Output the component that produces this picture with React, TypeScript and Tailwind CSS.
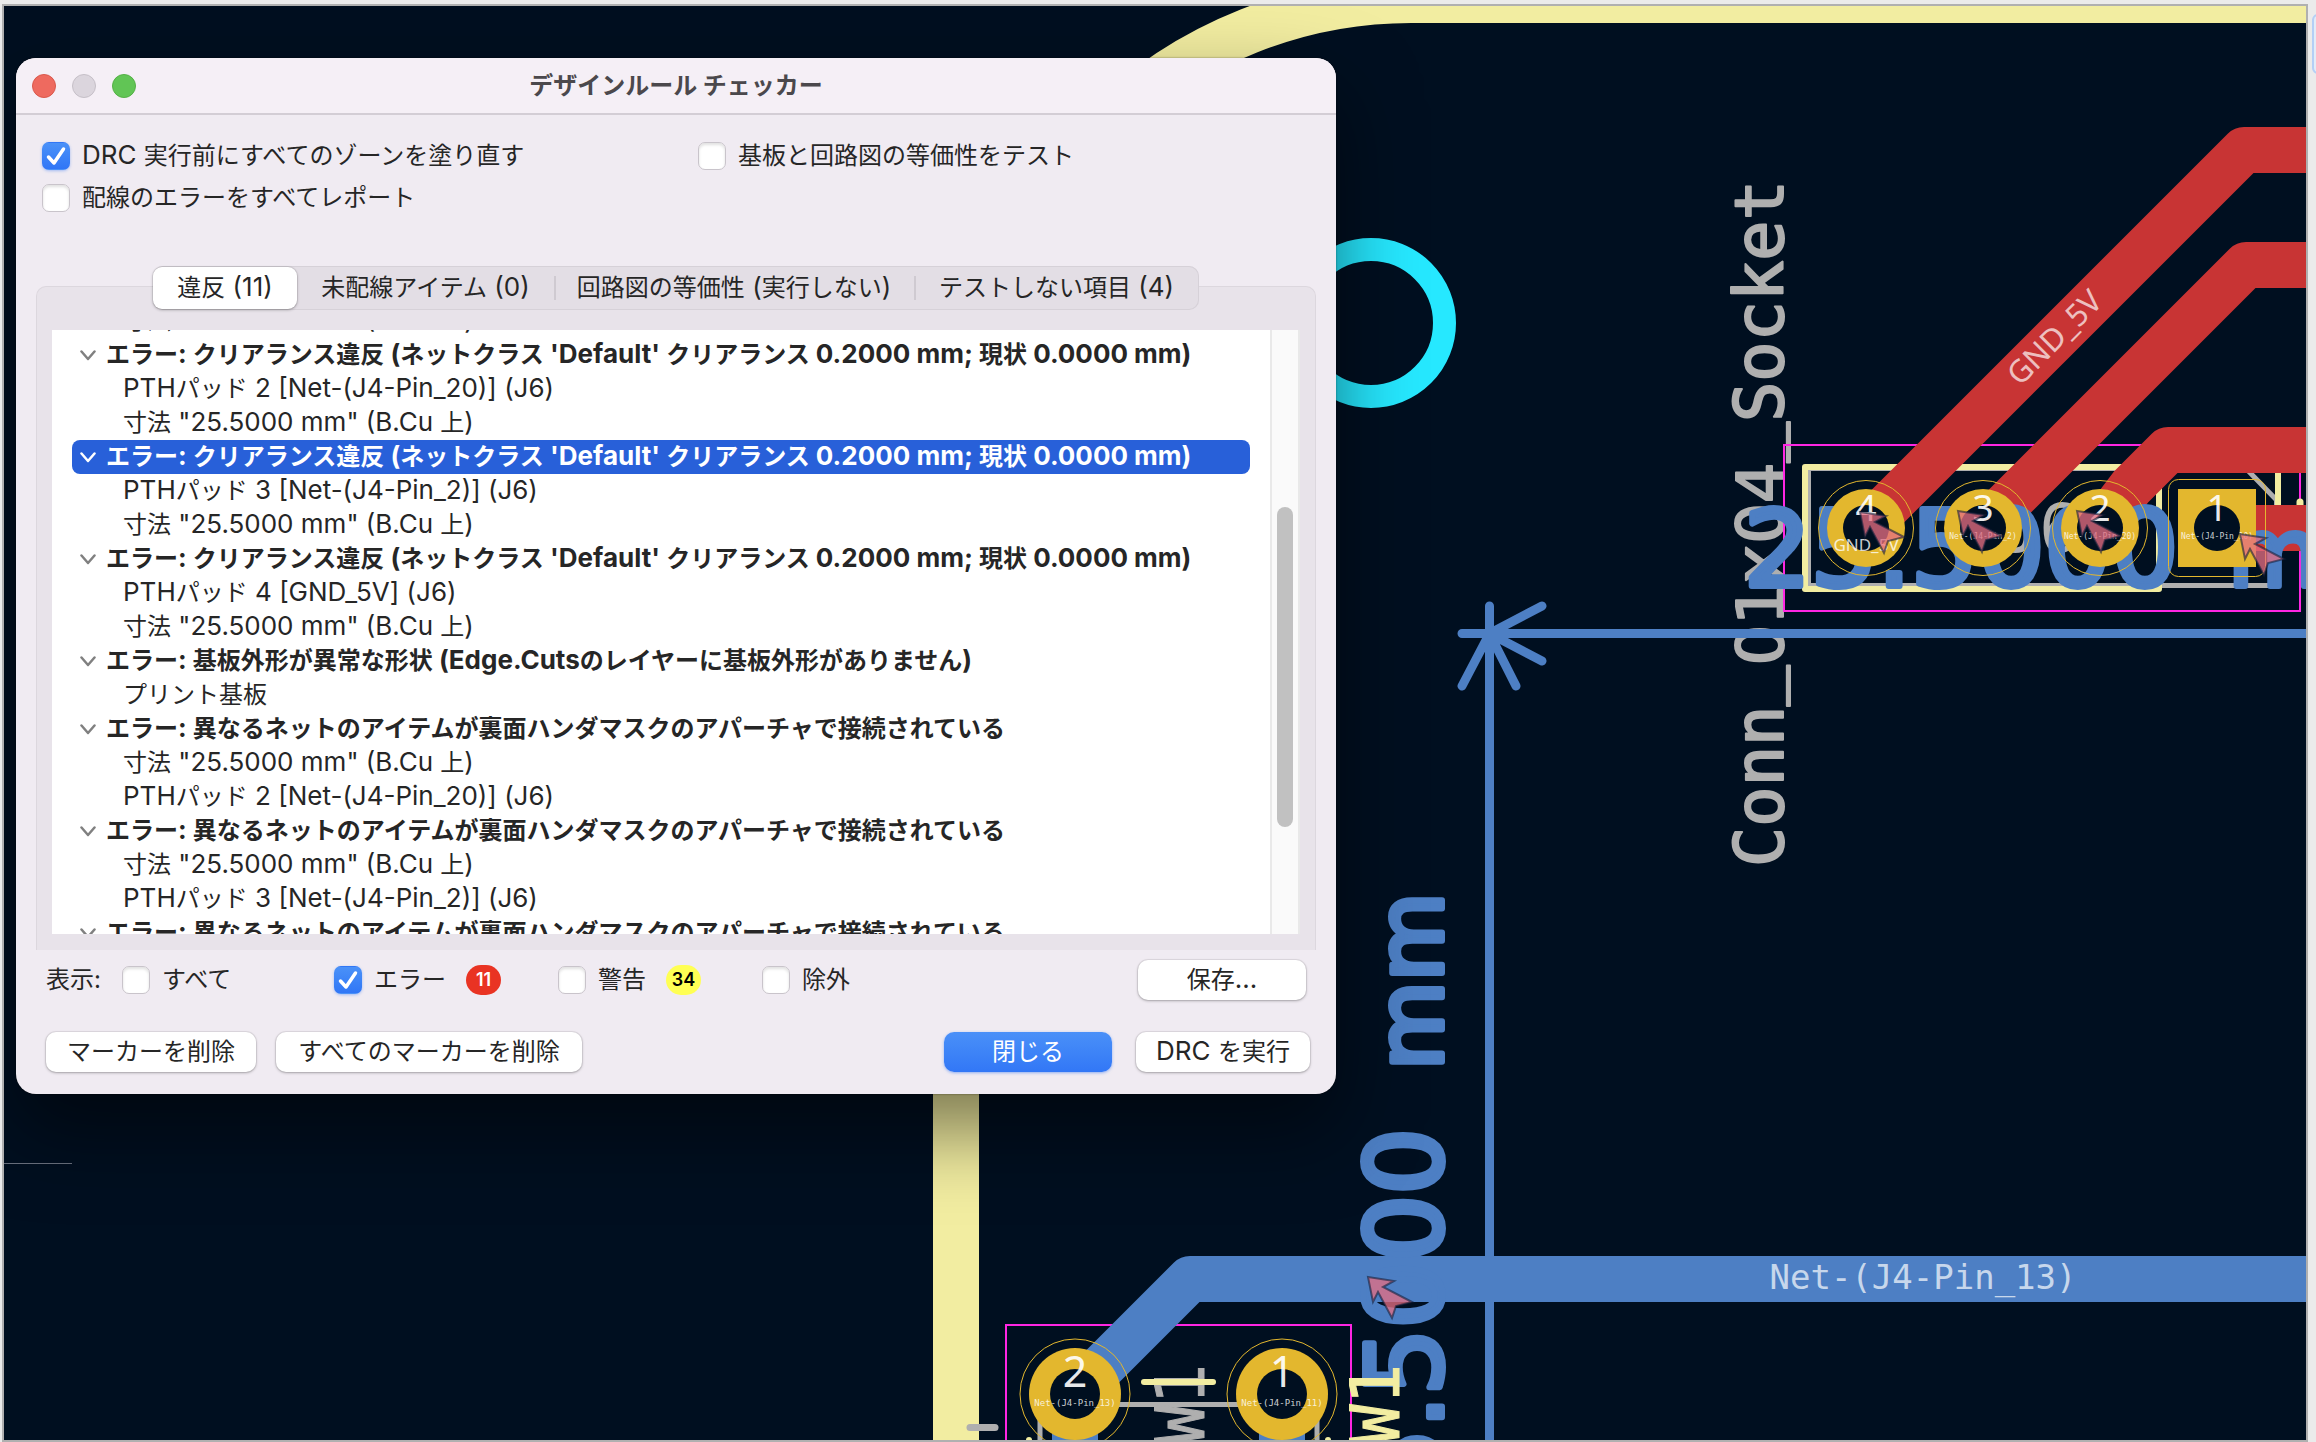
import React, { useId, useState } from "react";

const ui = "font-['Inter','Noto_Sans_CJK_JP',sans-serif]";

/* Latin runs are set slightly larger than the kana and kanji around them. */
function Mixed({ text }: { text: string }) {
  return (
    <>
      {text.split(/([\x20-\x7e]+)/).map((run, i) =>
        i % 2 === 1 ? <span key={i} className="text-[26px] leading-none">{run}</span> : run
      )}
    </>
  );
}

function Check({ label, initial = false }: { label: string; initial?: boolean }) {
  const id = useId();
  const [on, setOn] = useState(initial);
  return (
    <span className="flex h-7 items-center gap-3 leading-7">
      <span className="relative flex size-7 shrink-0">
        <input
          id={id}
          type="checkbox"
          checked={on}
          onChange={() => setOn(!on)}
          className="size-7 appearance-none rounded-[7px] border border-[#c9c4cb] bg-white shadow-[inset_0_2px_3px_rgba(0,0,0,0.12)] checked:border-transparent checked:bg-linear-to-b checked:from-[#4a91f8] checked:to-[#3076f6] checked:shadow-[0_1px_3px_rgba(48,118,246,0.4)]"
        />
        {on && (
          <svg viewBox="0 0 28 28" className="pointer-events-none absolute inset-0 size-7" fill="none">
            <path d="M6.500 15 L12 21 L21.500 7" stroke="#fff" strokeWidth="3.500" strokeLinecap="round" strokeLinejoin="round" />
          </svg>
        )}
      </span>
      <label htmlFor={id} className="whitespace-nowrap"><Mixed text={label} /></label>
    </span>
  );
}

function PushButton({ label, className, primary }: { label: string; className: string; primary?: boolean }) {
  return (
    <button
      type="button"
      className={
        "h-10 shrink-0 rounded-[10px] text-center leading-10 " +
        (primary
          ? "bg-linear-to-b from-[#4a90f8] to-[#3277f6] text-white shadow-[0_1px_3px_rgba(48,118,246,0.5)] "
          : "bg-white shadow-[0_0_0_1px_rgba(0,0,0,0.06),0_1px_3px_rgba(0,0,0,0.28)] ") +
        className
      }
    >
      <Mixed text={label} />
    </button>
  );
}

type Row = { text: string; head?: boolean; selected?: boolean };

const clearance = "エラー: クリアランス違反 (ネットクラス 'Default' クリアランス 0.2000 mm; 現状 0.0000 mm)";
const mask = "エラー: 異なるネットのアイテムが裏面ハンダマスクのアパーチャで接続されている";
const dim = '寸法 "25.5000 mm" (B.Cu 上)';

const rows: Row[] = [
  { text: dim },
  { text: clearance, head: true },
  { text: "PTHパッド 2 [Net-(J4-Pin_20)] (J6)" },
  { text: dim },
  { text: clearance, head: true, selected: true },
  { text: "PTHパッド 3 [Net-(J4-Pin_2)] (J6)" },
  { text: dim },
  { text: clearance, head: true },
  { text: "PTHパッド 4 [GND_5V] (J6)" },
  { text: dim },
  { text: "エラー: 基板外形が異常な形状 (Edge.Cutsのレイヤーに基板外形がありません)", head: true },
  { text: "プリント基板" },
  { text: mask, head: true },
  { text: dim },
  { text: "PTHパッド 2 [Net-(J4-Pin_20)] (J6)" },
  { text: mask, head: true },
  { text: dim },
  { text: "PTHパッド 3 [Net-(J4-Pin_2)] (J6)" },
  { text: mask, head: true },
];

function TreeRow({ row }: { row: Row }) {
  if (!row.head) {
    return <li className="h-[34px] pl-[51px] leading-[34px] whitespace-nowrap"><Mixed text={row.text} /></li>;
  }
  return (
    <li
      className={
        "flex h-[34px] items-center gap-[10px] rounded-lg pl-2 leading-[34px] font-bold whitespace-nowrap " +
        (row.selected ? "bg-[#2860d9] text-white" : "")
      }
    >
      <svg viewBox="0 0 16 16" className={"size-4 shrink-0 " + (row.selected ? "text-white" : "text-[#808080]")} fill="none">
        <path d="M1.500 4.500 L8 12 L14.500 4.500" stroke="currentColor" strokeWidth="2.500" strokeLinecap="round" strokeLinejoin="round" />
      </svg>
      <span><Mixed text={row.text} /></span>
    </li>
  );
}

const tabs = [
  { label: "違反 (11)", width: "w-[144px]" },
  { label: "未配線アイテム (0)", width: "w-[257px]" },
  { label: "回路図の等価性 (実行しない)", width: "w-[360px]" },
  { label: "テストしない項目 (4)", width: "w-[285px]" },
];

function Dialog() {
  return (
    <section
      role="dialog"
      aria-labelledby="drc-title"
      className={
        "absolute top-[52px] left-3 w-[1320px] overflow-hidden rounded-[20px] bg-[#f0ebf2] text-2xl text-[#262626] shadow-[0_36px_80px_rgba(0,0,0,0.5),0_0_2px_rgba(0,0,0,0.5)] " +
        ui
      }
    >
      <header className="grid h-[57px] grid-cols-[1fr_auto_1fr] items-center border-b-2 border-[#d3cdd5] bg-[#f5eff6] px-4">
        <span className="flex gap-4">
          <button type="button" aria-label="閉じる" className="size-6 rounded-full border border-[#d9584c] bg-[#ee6a5f]" />
          <button type="button" aria-label="しまう" className="size-6 rounded-full border border-[#c5bfc7] bg-[#dbd5dd]" />
          <button type="button" aria-label="拡大" className="size-6 rounded-full border border-[#54b046] bg-[#61c555]" />
        </span>
        <h1 id="drc-title" className="leading-8 font-bold text-[#4b484c]">デザインルール チェッカー</h1>
      </header>

      <div className="grid grid-cols-[656px_1fr] gap-y-[14px] px-[26px] pt-[27px]">
        <Check label="DRC 実行前にすべてのゾーンを塗り直す" initial />
        <Check label="基板と回路図の等価性をテスト" />
        <Check label="配線のエラーをすべてレポート" />
      </div>

      <div className="mt-[54px] flex flex-col px-5">
        <div role="tablist" className="relative z-10 flex h-11 self-center rounded-[10px] bg-[#e3dee5] shadow-[inset_0_0_0_1px_#d6d1d8]">
          {tabs.map((t, i) => (
            <button
              key={t.label}
              type="button"
              role="tab"
              aria-selected={i === 0}
              className={
                "relative my-px h-[42px] text-center leading-[42px] whitespace-nowrap " +
                t.width +
                (i === 0 ? " rounded-[9px] bg-white shadow-[0_0_0_1px_rgba(0,0,0,0.06),0_1px_3px_rgba(0,0,0,0.3)]" : "") +
                (i > 1 ? " before:absolute before:top-[9px] before:left-0 before:h-6 before:w-0.5 before:bg-[#cfcad1]" : "")
              }
            >
              <Mixed text={t.label} />
            </button>
          ))}
        </div>
        <div className="-mt-6 rounded-t-[10px] border border-b-0 border-[#dcd7de] bg-[#e8e3ea] px-[15px] pt-[43px] pb-4">
          <div className="flex h-[604px] overflow-hidden bg-white">
            <ul className="-mt-[26px] flex-1 pr-5 pl-5">
              {rows.map((r, i) => (
                <TreeRow key={i} row={r} />
              ))}
            </ul>
            <div className="w-[30px] border-x-2 border-[#e9e9e9] bg-[#fafafa] pt-[177px] pl-[5px]">
              <div className="h-80 w-4 rounded-full bg-[#c1c1c1]" />
            </div>
          </div>
        </div>
      </div>

      <div className="mt-[10px] flex h-10 items-center pr-[30px] pl-[30px]">
        <span className="w-[76px]">表示:</span>
        <span className="w-[212px]"><Check label="すべて" /></span>
        <span className="flex w-[224px] items-center gap-5">
          <Check label="エラー" initial />
          <span className="h-[30px] w-[35px] rounded-full bg-[#e93323] text-center text-lg leading-[30px] font-semibold text-white">11</span>
        </span>
        <span className="flex w-[204px] items-center gap-5">
          <Check label="警告" />
          <span className="h-[30px] w-[35px] rounded-full bg-[#ffff54] text-center text-lg leading-[30px] font-semibold text-black">34</span>
        </span>
        <Check label="除外" />
        <PushButton label="保存..." className="ml-auto w-[168px]" />
      </div>

      <footer className="mt-8 flex px-[30px] pb-[22px]">
        <PushButton label="マーカーを削除" className="w-[210px]" />
        <PushButton label="すべてのマーカーを削除" className="ml-5 w-[306px]" />
        <PushButton label="閉じる" primary className="mr-6 ml-auto w-[168px]" />
        <PushButton label="DRC を実行" className="-mr-1 w-[174px]" />
      </footer>
    </section>
  );
}

const COPPER_F = "#c83434";
const COPPER_B = "#4d7fc4";
const SILK = "#f2eda1";
const FAB = "#afafaf";
const COURT = "#ff26e2";
const GOLD = "#e3b72e";
const BG = "#000f20";
const MONO = "'DejaVu Sans Mono', monospace";
const THIN_MONO = "'Liberation Mono', monospace";
const SANS = "'DejaVu Sans', sans-serif";
const LABEL = "'Noto Sans', sans-serif";

function Marker({ x, y }: { x: number; y: number }) {
  return (
    <path
      d={`M${x} ${y} l26 4 l-11 6 l29 15 l-16 4 l-4 12 l-14 -26 l-5 10 z`}
      fill="#e66e82"
      fillOpacity="0.76"
      stroke="#14203a"
      strokeOpacity="0.6"
      strokeWidth="2"
    />
  );
}

function RoundPad({ x, y, r, hole, ring, num, numSize, net, netSize, netY }: {
  x: number; y: number; r: number; hole: number; ring: number; num: string; numSize: number; net: string; netSize: number; netY: number;
}) {
  return (
    <g>
      <circle cx={x} cy={y} r={r} fill={GOLD} />
      <circle cx={x} cy={y} r={hole} fill={BG} />
      <circle cx={x} cy={y} r={ring} fill="none" stroke={GOLD} strokeWidth="1" />
      <text x={x} y={y - 7} textAnchor="middle" fontFamily={LABEL} fontSize={numSize} fill="#fff" fillOpacity="0.92">{num}</text>
      <text x={x} y={netY} textAnchor="middle" fontFamily={netSize > 10 ? LABEL : MONO} fontSize={netSize} fill="#fff" fillOpacity="0.8">{net}</text>
    </g>
  );
}

function Board() {
  return (
    <svg viewBox="4 6 2302 1434" preserveAspectRatio="xMinYMin slice" className="absolute inset-0 size-full">
      <path d="M956 1460 V440 H971 A440 440 0 0 1 1411 0 H2320" fill="none" stroke={SILK} strokeWidth="46" />
      <path d="M4 1163.500 H72" stroke="#6b7280" />
      <circle cx="1371" cy="323" r="73.500" fill="none" stroke="#26e8ff" strokeWidth="23" />

      <text transform="translate(1783 867) rotate(-90)" fontFamily={MONO} fontSize="67" fill={FAB} stroke={FAB} strokeWidth="2" strokeLinejoin="round">
        Conn<tspan fontFamily={THIN_MONO}>_</tspan><tspan fontFamily={SANS} fontSize="64">01</tspan>x<tspan fontFamily={SANS} fontSize="64">04</tspan><tspan fontFamily={THIN_MONO}>_</tspan>Socket
      </text>
      <text x="1999" y="552" fontFamily={MONO} fontSize="67" fill={FAB}>J6</text>

      <rect x="1784" y="445" width="516" height="166" fill="none" stroke={COURT} strokeWidth="2" />
      <path d="M1808.500 468.500 H2246 L2276.500 500 V585.500 H1808.500 Z" fill="none" stroke={FAB} strokeWidth="5" />
      <rect x="1805" y="467" width="354" height="122" fill="none" stroke={SILK} strokeWidth="6" strokeLinejoin="round" />
      <path d="M2278 466 V520" stroke={SILK} strokeWidth="6" />
      <path d="M2300 502 V530" stroke={SILK} strokeWidth="7" strokeLinecap="round" />

      <g fill="none" stroke={COPPER_F} strokeWidth="46" strokeLinecap="round" strokeLinejoin="round">
        <path d="M2330 150 H2244 L1866 528" />
        <path d="M2330 265 H2246 L1983 528" />
        <path d="M2330 450 H2168 L2131 487 L2100 528" />
        <path d="M2330 528 H2217" />
      </g>
      <text transform="translate(2055 338) rotate(-45)" y="10" textAnchor="middle" fontFamily={LABEL} fontSize="31" fill="#fff" fillOpacity="0.7">GND_5V</text>

      <rect x="1006" y="1325" width="345" height="160" fill="none" stroke={COURT} strokeWidth="2" />
      <path d="M1075 1404.500 H1282 M1040 1404 V1450 M1317 1404 V1450" stroke={FAB} strokeWidth="5" />
      <path d="M970 1427.500 H995" stroke={FAB} strokeWidth="7" strokeLinecap="round" />
      <text transform="translate(1204 1364) rotate(-90)" textAnchor="end" fontFamily={MONO} fontSize="67" fill={FAB} stroke={FAB}>SW1</text>
      <path d="M1144 1382 H1213" stroke={SILK} strokeWidth="6" strokeLinecap="round" />
      <circle cx="1029" cy="1440" r="3" fill={SILK} />
      <circle cx="1328" cy="1440" r="3" fill={SILK} />

      <g fill="none" stroke={COPPER_B} strokeLinecap="round" strokeLinejoin="round">
        <path d="M2330 1279 H1190 L1075 1394 V1480 M1282 1394 V1480" strokeWidth="46" />
        <path d="M2330 633.500 H1462 M1489.500 606 V1460 M1542 606 L1489.500 633.500 L1542 661 M1462 686 L1489.500 633.500 L1516 686" strokeWidth="9" />
      </g>
      <g fill={COPPER_B} stroke={COPPER_B} strokeWidth="6" strokeLinejoin="round" fontFamily={SANS}>
        <text x="1744" y="586" fontSize="105">25.5000</text>
        <text x="2228" y="586" fontSize="95">mm</text>
        <text transform="translate(1442 1128) rotate(-90)" textAnchor="end" fontSize="105">25.5000</text>
        <text transform="translate(1442 1070) rotate(-90)" fontSize="91">mm</text>
      </g>
      <text transform="translate(1399 1364) rotate(-90)" textAnchor="end" fontFamily={MONO} fontSize="67" fill={SILK} stroke={SILK}>SW1</text>
      <text x="1923" y="1289" textAnchor="middle" fontFamily={MONO} fontSize="34" fill="#fff" fillOpacity="0.7">Net-(J4-Pin_13)</text>

      <RoundPad x={1866} y={528} r={39} hole={23} ring={47.5} num="4" numSize={37} net="GND_5V" netSize={17} netY={551} />
      <RoundPad x={1983} y={528} r={39} hole={23} ring={47.5} num="3" numSize={37} net="Net-(J4-Pin_2)" netSize={8} netY={539} />
      <RoundPad x={2100} y={528} r={39} hole={23} ring={47.5} num="2" numSize={37} net="Net-(J4-Pin_20)" netSize={8} netY={539} />
      <rect x="2178" y="489" width="78" height="78" fill={GOLD} />
      <circle cx="2217" cy="528" r="23" fill={BG} />
      <rect x="2168.500" y="479.500" width="97" height="97" rx="10" fill="none" stroke={GOLD} />
      <text x="2217" y="521" textAnchor="middle" fontFamily={LABEL} fontSize="37" fill="#fff" fillOpacity="0.92">1</text>
      <text x="2217" y="539" textAnchor="middle" fontFamily={MONO} fontSize="8" fill="#fff" fillOpacity="0.8">Net-(J4-Pin_10)</text>

      <RoundPad x={1075} y={1394} r={46} hole={25} ring={55} num="2" numSize={43} net="Net-(J4-Pin_13)" netSize={9} netY={1406} />
      <RoundPad x={1282} y={1394} r={46} hole={25} ring={55} num="1" numSize={43} net="Net-(J4-Pin_11)" netSize={9} netY={1406} />

      <Marker x={1860} y={512} />
      <Marker x={1958} y={511} />
      <Marker x={2077} y={511} />
      <Marker x={2240} y={534} />
      <Marker x={1368} y={1277} />
    </svg>
  );
}

export default function App() {
  return (
    <main className="flex h-screen min-h-[1120px] bg-[#ebebeb] pt-1 pl-0.5">
      <div className="relative flex-1 overflow-hidden border-2 border-[#b0b0b0] bg-[#000f20]">
        <Board />
        <Dialog />
      </div>
      <aside className="w-2 overflow-hidden pt-[10px] pl-1">
        <div className="h-[60px] w-16 rounded-md border-2 border-[#b4cff5] bg-[#e3ecf8]" />
      </aside>
    </main>
  );
}
